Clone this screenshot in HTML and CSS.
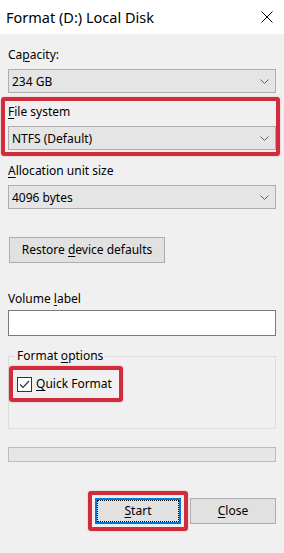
FILE: index.html
```html
<!DOCTYPE html>
<html lang="en">
<head>
<meta charset="utf-8">
<title>Format (D:) Local Disk</title>
<link rel="stylesheet" href="styles.css">
</head>
<body>
<div class="dialog">
  <div class="titlebar">
    <span class="title">Format (D:) Local Disk</span>
    <svg class="close-x" width="12" height="12" viewBox="0 0 12 12"><path d="M0.5 0.5 L11.5 11.5 M11.5 0.5 L0.5 11.5" stroke="#000" stroke-width="1" fill="none"/></svg>
  </div>
  <div class="content">
    <div class="label first">Ca<u>p</u>acity:</div>
    <div class="combo"><span>234 GB</span><svg width="9" height="5" viewBox="0 0 9 5"><polyline points="0.5,0.5 4.5,4.5 8.5,0.5" stroke="#606060" fill="none" stroke-width="1"/></svg></div>

    <div class="hl hl-fs">
      <div class="label"><u>F</u>ile system</div>
      <div class="combo"><span>NTFS (Default)</span><svg width="9" height="5" viewBox="0 0 9 5"><polyline points="0.5,0.5 4.5,4.5 8.5,0.5" stroke="#606060" fill="none" stroke-width="1"/></svg></div>
    </div>

    <div class="label alloc"><u>A</u>llocation unit size</div>
    <div class="combo"><span>4096 bytes</span><svg width="9" height="5" viewBox="0 0 9 5"><polyline points="0.5,0.5 4.5,4.5 8.5,0.5" stroke="#606060" fill="none" stroke-width="1"/></svg></div>

    <button class="btn restore">Restore <u>d</u>evice defaults</button>

    <div class="label vol">Volume <u>l</u>abel</div>
    <div class="textbox"></div>

    <fieldset class="group">
      <legend>Format <u>o</u>ptions</legend>
      <div class="hl hl-check">
        <span class="checkbox"><svg width="13" height="13" viewBox="0 0 13 13"><polyline points="2,6.5 5,9.5 11,3" stroke="#333" fill="none" stroke-width="1.2"/></svg></span>
        <span class="check-label"><u>Q</u>uick Format</span>
      </div>
    </fieldset>

    <div class="progress"></div>

    <div class="actions">
      <div class="hl hl-start"><button class="btn action default"><u>S</u>tart</button></div>
      <button class="btn action"><u>C</u>lose</button>
    </div>
  </div>
</div>
</body>
</html>
```

FILE: styles.css
```css
html, body {
  margin: 0;
  padding: 0;
}
body {
  width: 284px;
  height: 553px;
  background: #f0f0f0;
  font-family: "Noto Sans", "Open Sans", sans-serif;
  font-size: 12px;
  color: #000;
  overflow: hidden;
}
u {
  text-decoration: underline;
  text-decoration-thickness: 1px;
  text-underline-offset: 2px;
}
.titlebar {
  height: 34px;
  background: #fff;
  display: flex;
  align-items: center;
  justify-content: space-between;
  padding: 0 11px 0 6px;
}
.title {
  font-size: 14.5px;
  line-height: 18px;
}
.close-x {
  display: block;
}
.content {
  padding: 0 8px;
}
.label {
  line-height: 16px;
  height: 16px;
  white-space: nowrap;
}
.label.first { margin-top: 13px; }
.label.alloc { margin-top: 13px; }
.label.vol { margin-top: 28px; }
.combo {
  margin-top: 6px;
  height: 24px;
  box-sizing: border-box;
  border: 1px solid #adadad;
  background: #e5e5e5;
  display: flex;
  align-items: center;
  justify-content: space-between;
  padding: 0 6px 0 3px;
}
.combo svg { display: block; }
.hl {
  position: relative;
}
.hl::after {
  content: "";
  position: absolute;
  border: 4px solid #d22b3b;
  border-radius: 3px;
  box-shadow: 0 0 2px rgba(210, 43, 59, 0.35);
  pointer-events: none;
}
.hl-fs { margin-top: 11px; }
.hl-fs::after { top: -7px; left: -7px; right: -4px; bottom: -6px; }
.btn {
  font-family: inherit;
  font-size: 12px;
  color: #000;
  background: #e1e1e1;
  border: 1px solid #adadad;
  border-radius: 0;
  padding: 0;
  margin: 0;
  box-sizing: border-box;
  line-height: 16px;
}
.restore {
  display: block;
  margin: 28px 0 0 1px;
  width: 156px;
  height: 26px;
}
.textbox {
  margin-top: 3px;
  height: 26px;
  box-sizing: border-box;
  border: 1px solid #7a7a7a;
  background: #fff;
}
.group {
  margin: 12px 0 0 0;
  border: 1px solid #dcdcdc;
  padding: 0 0 33px 8px;
  min-width: 0;
}
.group legend {
  padding: 0 2px;
  margin-left: -2px;
  line-height: 16px;
}
.hl-check {
  margin-top: 12px;
  display: inline-flex;
  align-items: center;
  gap: 4px;
  height: 16px;
}
.hl-check::after { top: -10px; left: -8px; right: -11px; bottom: -10px; }
.checkbox {
  width: 15px;
  height: 15px;
  box-sizing: border-box;
  border: 1px solid #333;
  background: #fff;
  display: flex;
  align-items: center;
  justify-content: center;
}
.checkbox svg { display: block; }
.check-label { line-height: 16px; white-space: nowrap; }
.progress {
  margin-top: 18px;
  height: 15px;
  box-sizing: border-box;
  border: 1px solid #bcbcbc;
  background: #e6e6e6;
}
.actions {
  margin-top: 36px;
  display: flex;
  justify-content: flex-end;
  gap: 9px;
}
.action {
  display: block;
  width: 86px;
  height: 26px;
}
.hl-start::after { top: -7px; left: -7px; right: -7px; bottom: -7px; }
.default {
  border: 2px solid #0078d7;
  outline: 1px dotted #000;
  outline-offset: -3px;
}
```
